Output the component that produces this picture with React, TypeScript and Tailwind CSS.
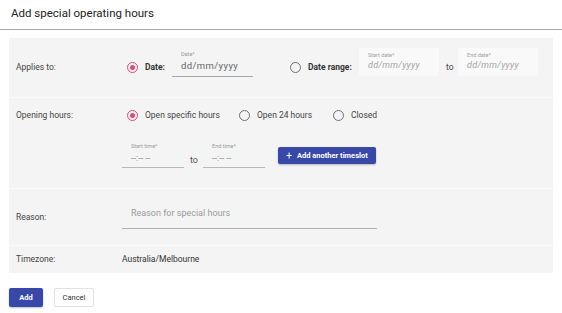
import React from "react";

function Radio({ checked }: { checked?: boolean }) {
  return checked ? (
    <span className="grid size-[11px] shrink-0 place-items-center rounded-full border-[1.5px] border-[#e2487e]">
      <span className="size-[5px] rounded-full bg-[#e2487e]" />
    </span>
  ) : (
    <span className="block size-[11px] shrink-0 rounded-full border-[1.5px] border-[#6f6f6f]" />
  );
}

function UnderlineField({ label, value, width }: { label: string; value: string; width: string }) {
  return (
    <div className={`flex flex-col border-b border-[#b8b8b8] pb-[2px] pl-[9px] ${width}`}>
      <span className="text-[5.5px] leading-[8px] text-[#9a9a9a]">{label}</span>
      <span className="mt-[1px] text-[9px] leading-[14px] text-[#8a8a8a]">{value}</span>
    </div>
  );
}

function BoxField({ label }: { label: string }) {
  return (
    <div className="mb-[12px] flex h-[28px] w-[80px] flex-col bg-[#f9f9f9] pl-[9px] pt-[3px]">
      <span className="text-[5.5px] leading-[8px] text-[#a0a0a0]">{label}</span>
      <span className="text-[9px] italic leading-[13px] tracking-[0.3px] text-[#a3a3a3]">dd/mm/yyyy</span>
    </div>
  );
}

function Option({ label, checked, width }: { label: string; checked?: boolean; width: string }) {
  return (
    <div className={`flex items-center gap-[7px] ${width}`}>
      <Radio checked={checked} />
      <span>{label}</span>
    </div>
  );
}

export default function App() {
  return (
    <div className="min-h-[313px] w-[562px] bg-white font-['Roboto',sans-serif] text-[8.5px] text-[#444]">
      <div className="flex h-[30px] items-center border-b border-[#a8a8a8] px-[11px] pb-[2px]">
        <h1 className="text-[11.5px] font-normal text-[#222]">Add special operating hours</h1>
      </div>

      <div className="mx-[9px] mt-[8px] bg-[#f4f4f4]">
        <div className="flex h-[59px] items-center">
          <div className="w-[118px] pl-[7px]">Applies to:</div>
          <Radio checked />
          <span className="ml-[7px] w-[27px] font-bold text-[#333]">Date:</span>
          <div className="mb-[8px] flex w-[81px] flex-col border-b border-[#a8a8a8] pb-[3px] pl-[9px]">
            <span className="text-[5.5px] leading-[8px] text-[#9a9a9a]">Date*</span>
            <span className="mt-[1px] text-[9.5px] leading-[14px] tracking-[0.4px] text-[#666]">dd/mm/yyyy</span>
          </div>
          <span className="ml-[37px] flex">
            <Radio />
          </span>
          <span className="ml-[7px] w-[51px] font-bold text-[#333]">Date range:</span>
          <BoxField label="Start date*" />
          <span className="w-[19px] pl-[7px]">to</span>
          <BoxField label="End date*" />
        </div>

        <div className="flex h-[91px] border-t border-[#fbfbfb]">
          <div className="w-[118px] pl-[7px] pt-[11px] leading-[12px]">Opening hours:</div>
          <div className="flex flex-col pt-[11px]">
            <div className="flex h-[12px] items-center">
              <Option checked label="Open specific hours" width="w-[112px]" />
              <Option label="Open 24 hours" width="w-[94px]" />
              <Option label="Closed" width="w-[60px]" />
            </div>
            <div className="-ml-[5px] mt-[21px] flex items-end">
              <UnderlineField label="Start time*" value="--:-- --" width="w-[62px]" />
              <span className="mb-[2px] w-[19px] pl-[6px] text-[9px] leading-[12px] text-[#555]">to</span>
              <UnderlineField label="End time*" value="--:-- --" width="w-[62px]" />
              <button className="mb-[4px] ml-[13px] flex h-[17px] w-[98px] items-center justify-center gap-[5px] rounded-[2px] bg-[#3848a8] text-[7.5px] font-bold text-white shadow-[0_1px_2px_rgba(0,0,0,0.25)]">
                <span className="text-[10px] font-normal leading-none">+</span>
                Add another timeslot
              </button>
            </div>
          </div>
        </div>

        <div className="flex h-[57px] items-center border-t border-[#fbfbfb]">
          <div className="w-[118px] pl-[7px]">Reason:</div>
          <div className="-ml-[5px] w-[255px] border-b border-[#b0b0b0] pb-[8px] pl-[9px] pt-[1px]">
            <span className="text-[9px] leading-[14px] text-[#9a9a9a]">Reason for special hours</span>
          </div>
        </div>

        <div className="flex h-[28px] items-center border-t border-[#fbfbfb]">
          <div className="w-[113px] pl-[7px]">Timezone:</div>
          <div className="text-[#333]">Australia/Melbourne</div>
        </div>
      </div>

      <div className="mt-[15px] flex gap-[11px] px-[9px]">
        <button className="h-[19px] w-[34px] rounded-[2px] bg-[#3848a8] text-[7.5px] font-bold text-white shadow-[0_1px_2px_rgba(0,0,0,0.25)]">
          Add
        </button>
        <button className="h-[19px] w-[40px] rounded-[2px] border border-[#e2e2e2] bg-white text-[7.5px] text-[#333]">
          Cancel
        </button>
      </div>
    </div>
  );
}
